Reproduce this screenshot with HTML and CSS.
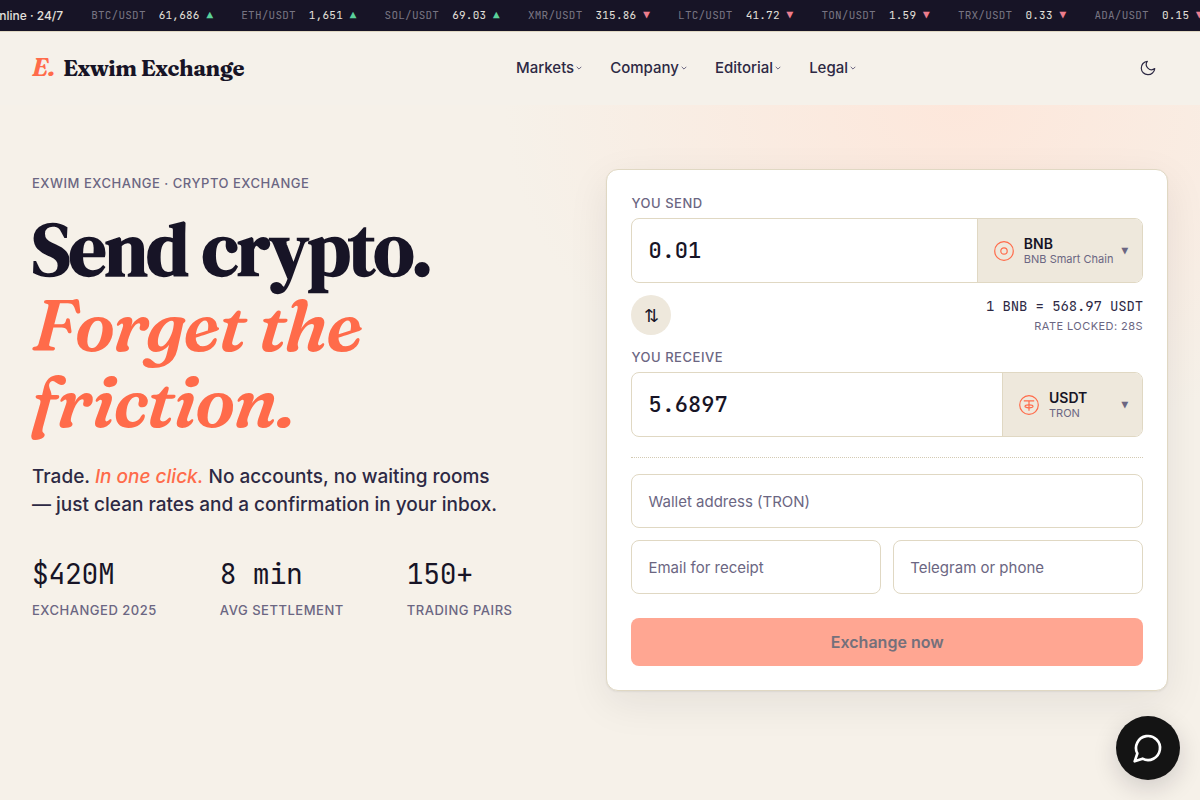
FILE: index.html
```html
<!DOCTYPE html>
<html lang="en">
<head>
<meta charset="utf-8">
<meta name="viewport" content="width=device-width, initial-scale=1">
<title>Exwim Exchange</title>
<link rel="stylesheet" href="styles.css">
</head>
<body>
<div class="ticker">
  <div class="ticker-track">
    <span class="status">Online · 24/7</span>
    <span class="quote"><span class="pair">BTC/USDT</span><span class="price">61,686 <i class="up">▲</i></span></span>
    <span class="quote"><span class="pair">ETH/USDT</span><span class="price">1,651 <i class="up">▲</i></span></span>
    <span class="quote"><span class="pair">SOL/USDT</span><span class="price">69.03 <i class="up">▲</i></span></span>
    <span class="quote"><span class="pair">XMR/USDT</span><span class="price">315.86 <i class="down">▼</i></span></span>
    <span class="quote"><span class="pair">LTC/USDT</span><span class="price">41.72 <i class="down">▼</i></span></span>
    <span class="quote"><span class="pair">TON/USDT</span><span class="price">1.59 <i class="down">▼</i></span></span>
    <span class="quote"><span class="pair">TRX/USDT</span><span class="price">0.33 <i class="down">▼</i></span></span>
    <span class="quote"><span class="pair">ADA/USDT</span><span class="price">0.15 <i class="down">▼</i></span></span>
  </div>
</div>

<header class="header">
  <a class="logo" href="#"><em class="logo-mark">E.</em><span class="logo-name">Exwim Exchange</span></a>
  <nav class="nav">
    <button class="nav-item" type="button">Markets<svg class="chevron" viewBox="0 0 6 4"><path d="M.7 .8 3 3.1 5.3 .8"/></svg></button>
    <button class="nav-item" type="button">Company<svg class="chevron" viewBox="0 0 6 4"><path d="M.7 .8 3 3.1 5.3 .8"/></svg></button>
    <button class="nav-item" type="button">Editorial<svg class="chevron" viewBox="0 0 6 4"><path d="M.7 .8 3 3.1 5.3 .8"/></svg></button>
    <button class="nav-item" type="button">Legal<svg class="chevron" viewBox="0 0 6 4"><path d="M.7 .8 3 3.1 5.3 .8"/></svg></button>
  </nav>
  <button class="theme-toggle" type="button" aria-label="Switch theme">
    <svg class="moon" viewBox="0 0 24 24"><path d="M21 12.8A9 9 0 1 1 11.2 3a7 7 0 0 0 9.8 9.8z"/></svg>
  </button>
</header>

<main class="hero">
  <section class="intro">
    <p class="eyebrow">Exwim Exchange · Crypto exchange</p>
    <h1 class="title">Send crypto. <em class="title-accent">Forget the friction.</em></h1>
    <p class="lead">Trade. <em class="lead-accent">In one click.</em> No accounts, no waiting rooms — just clean rates and a confirmation in your inbox.</p>
    <dl class="stats">
      <div class="stat"><dt class="stat-label">Exchanged 2025</dt><dd class="stat-value">$420M</dd></div>
      <div class="stat"><dt class="stat-label">Avg settlement</dt><dd class="stat-value">8 min</dd></div>
      <div class="stat"><dt class="stat-label">Trading pairs</dt><dd class="stat-value">150+</dd></div>
    </dl>
  </section>

  <form class="card">
    <label class="label" for="send">You send</label>
    <div class="amount">
      <input class="amount-input" id="send" type="text" inputmode="decimal" value="0.01">
      <button class="asset" type="button">
        <svg class="coin" viewBox="0 0 22 22"><circle cx="11" cy="11" r="9.3"/><circle cx="11" cy="11" r="3.2"/></svg>
        <span class="asset-text"><span class="asset-name">BNB</span><span class="asset-network">BNB Smart Chain</span></span>
        <span class="caret">▼</span>
      </button>
    </div>
    <div class="rate-row">
      <button class="swap" type="button" aria-label="Swap currencies">⇅</button>
      <div class="rate">
        <span class="rate-value">1 BNB = 568.97 USDT</span>
        <span class="rate-lock">Rate locked: 28s</span>
      </div>
    </div>
    <label class="label" for="receive">You receive</label>
    <div class="amount">
      <input class="amount-input" id="receive" type="text" inputmode="decimal" value="5.6897">
      <button class="asset" type="button">
        <svg class="coin" viewBox="0 0 22 22"><circle cx="11" cy="11" r="9.3"/><path d="M5.8 6.8h10.4M11 6.8v10"/><ellipse cx="11" cy="12.3" rx="4" ry="1.5"/></svg>
        <span class="asset-text"><span class="asset-name">USDT</span><span class="asset-network">TRON</span></span>
        <span class="caret">▼</span>
      </button>
    </div>
    <hr class="divider">
    <div class="contacts">
      <input class="field field-wide" type="text" placeholder="Wallet address (TRON)" aria-label="Wallet address (TRON)">
      <input class="field" type="email" placeholder="Email for receipt" aria-label="Email for receipt">
      <input class="field" type="text" placeholder="Telegram or phone" aria-label="Telegram or phone">
    </div>
    <button class="submit" type="submit" disabled>Exchange now</button>
  </form>
</main>

<button class="chat" type="button" aria-label="Open chat">
  <svg class="chat-icon" viewBox="0 0 24 24"><path d="M7.9 20A9 9 0 1 0 4 16.1L2 22Z"/></svg>
</button>
</body>
</html>
```
FILE: styles.css
```css
:root {
  --ink: #171426;
  --ink-soft: #2d2944;
  --muted: #6b6682;
  --paper: #f6f1e9;
  --sand: #eee8dc;
  --line: #e0d8c3;
  --coral: #ff6b4a;
  --sans: Inter, "Liberation Sans", sans-serif;
  --serif: Fraunces, "Liberation Serif", serif;
  --display: "DM Serif Display", Fraunces, "Liberation Serif", serif;
  --mono: "JetBrains Mono", "Liberation Mono", monospace;
}

* { box-sizing: border-box; }

body {
  margin: 0;
  min-height: 100vh;
  display: flex;
  flex-direction: column;
  background: var(--paper);
  color: var(--ink);
  font-family: var(--sans);
}

button, input { font: inherit; color: inherit; }
button { border: 0; padding: 0; background: none; cursor: pointer; }

.ticker {
  overflow: hidden;
  background: var(--ink);
  color: #e4e1dc;
}
.ticker-track {
  display: flex;
  align-items: center;
  gap: 28px;
  height: 31px;
  margin-left: -10px;
  padding-bottom: 1px;
  white-space: nowrap;
  font-family: var(--mono);
  font-size: 11px;
  letter-spacing: 0.02em;
}
.status {
  font-family: var(--sans);
  font-size: 12px;
  font-weight: 500;
  letter-spacing: 0;
}
.quote { display: flex; gap: 13px; }
.pair { color: #777482; }
.up, .down { font-style: normal; }
.up { color: #5ad19a; }
.down { color: #ec7d8d; }

.header {
  display: flex;
  align-items: center;
  justify-content: space-between;
  padding: 16px 32px;
  border-top: 1px solid var(--line);
  border-bottom: 1px solid transparent;
  background: #f5f1ea;
}
.logo {
  display: flex;
  align-items: baseline;
  gap: 8px;
  font-family: var(--serif);
  line-height: 32px;
  font-weight: 700;
  color: var(--ink);
  text-decoration: none;
}
.logo-mark { font-size: 24px; color: var(--coral); }
.logo-name { font-size: 22px; letter-spacing: -0.02em; }
.nav { display: flex; gap: 28px; }
.nav-item {
  display: flex;
  align-items: center;
  gap: 2px;
  font-size: 15px;
  line-height: 20px;
  font-weight: 500;
  color: var(--ink-soft);
}
.chevron {
  width: 6px;
  height: 4px;
  fill: none;
  stroke: var(--muted);
  stroke-width: 1;
}
.theme-toggle {
  display: grid;
  place-items: center;
  width: 40px;
  height: 40px;
}
.moon {
  width: 18px;
  height: 18px;
  fill: none;
  stroke: var(--ink-soft);
  stroke-width: 1.6;
  stroke-linejoin: round;
}

.hero {
  flex: 1;
  display: grid;
  grid-template-columns: 1fr 1.1fr;
  gap: 64px;
  align-items: start;
  padding: 64px 32px;
  background: radial-gradient(ellipse 38% 50% at 80% 0, #fde7db, rgba(253, 231, 219, 0)) no-repeat;
}
.intro { padding-top: 4px; }
.eyebrow {
  margin: 0 0 18px;
  font-size: 13px;
  line-height: 20px;
  font-weight: 500;
  letter-spacing: 0.04em;
  text-transform: uppercase;
  color: var(--muted);
}
.title {
  margin: 0 0 24px;
  font-family: var(--display);
  font-size: 74px;
  line-height: 76px;
  font-weight: 700;
  letter-spacing: -0.02em;
}
.title-accent {
  display: block;
  font-family: var(--serif);
  font-size: 72px;
  font-weight: 600;
  color: var(--coral);
}
.lead {
  max-width: 480px;
  margin: 0 0 35px;
  font-size: 19px;
  line-height: 28px;
  font-weight: 500;
  color: var(--ink-soft);
}
.lead-accent { color: var(--coral); }
.stats { display: flex; gap: 63px; margin: 0; }
.stat { display: flex; flex-direction: column-reverse; gap: 6px; }
.stat-value {
  margin: 0;
  font-family: var(--mono);
  font-size: 28px;
  line-height: 40px;
  letter-spacing: -0.01em;
}
.stat-label {
  font-size: 13px;
  line-height: 20px;
  font-weight: 500;
  letter-spacing: 0.04em;
  text-transform: uppercase;
  color: var(--muted);
}

.card {
  padding: 24px;
  border: 1px solid var(--line);
  border-radius: 12px;
  background: #fff;
  box-shadow: 0 1px 2px rgba(23, 20, 38, 0.06), 0 12px 40px rgba(23, 20, 38, 0.08);
}
.label {
  display: block;
  margin-bottom: 6px;
  font-size: 13px;
  line-height: 18px;
  font-weight: 500;
  letter-spacing: 0.04em;
  text-transform: uppercase;
  color: var(--muted);
}
.amount {
  display: flex;
  height: 65px;
  overflow: hidden;
  border: 1px solid var(--line);
  border-radius: 8px;
}
.amount-input {
  flex: 1;
  min-width: 0;
  padding: 0 16px;
  border: 0;
  background: none;
  font-family: var(--mono);
  font-size: 22px;
  font-weight: 500;
}
.asset {
  display: flex;
  align-items: center;
  min-width: 140px;
  padding: 0 14px 0 15px;
  border-left: 1px solid var(--line);
  background: var(--sand);
  text-align: left;
}
.coin {
  width: 22px;
  height: 22px;
  margin-right: 9px;
  fill: none;
  stroke: var(--coral);
  stroke-width: 1.2;
}
.asset-text { display: flex; flex-direction: column; }
.asset-name { font-size: 14px; line-height: 16px; font-weight: 600; }
.asset-network { font-size: 11px; line-height: 14px; color: var(--muted); }
.caret {
  margin-left: auto;
  padding-left: 8px;
  font-family: var(--mono);
  font-size: 11px;
  color: var(--muted);
}
.rate-row {
  display: flex;
  align-items: flex-start;
  justify-content: space-between;
  margin: 12px 0;
}
.swap {
  width: 40px;
  height: 40px;
  border-radius: 50%;
  background: var(--sand);
  font-size: 18px;
}
.rate { display: flex; flex-direction: column; text-align: right; }
.rate-value {
  font-family: var(--mono);
  font-size: 14px;
  line-height: 22px;
  letter-spacing: -0.01em;
  color: var(--ink-soft);
}
.rate-lock {
  font-size: 11px;
  line-height: 19px;
  letter-spacing: 0.04em;
  text-transform: uppercase;
  color: var(--muted);
}
.divider {
  margin: 20px 0 16px;
  border: 0;
  border-top: 1px dotted #d3cab4;
}
.contacts {
  display: grid;
  grid-template-columns: 1fr 1fr;
  gap: 12px;
  margin-bottom: 24px;
}
.field {
  width: 100%;
  min-width: 0;
  height: 54px;
  padding: 0 16px;
  border: 1px solid var(--line);
  border-radius: 8px;
  background: #fff;
  font-size: 15px;
}
.field::placeholder { color: var(--muted); opacity: 1; }
.field-wide { grid-column: 1 / -1; }
.submit {
  width: 100%;
  height: 48px;
  border-radius: 8px;
  background: #ffa692;
  font-size: 16px;
  font-weight: 600;
  color: #74707b;
}

.chat {
  position: fixed;
  right: 20px;
  bottom: 20px;
  display: grid;
  place-items: center;
  width: 64px;
  height: 64px;
  border-radius: 50%;
  background: #141414;
  box-shadow: 0 8px 24px rgba(23, 20, 38, 0.16);
}
.chat-icon {
  width: 32px;
  height: 32px;
  fill: none;
  stroke: #fff;
  stroke-width: 2;
  stroke-linecap: round;
  stroke-linejoin: round;
}

@media (max-width: 860px) {
  .hero { grid-template-columns: 1fr; }
  .header { flex-wrap: wrap; }
}
```
